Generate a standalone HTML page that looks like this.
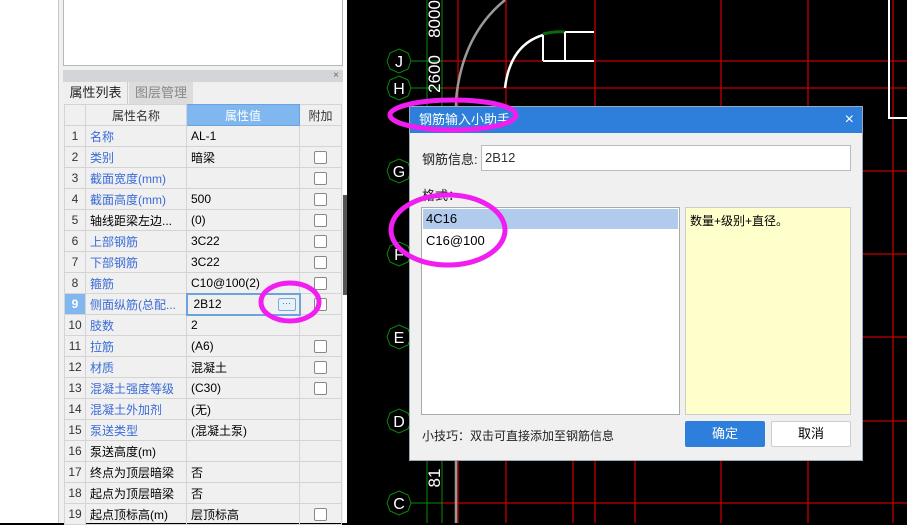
<!DOCTYPE html>
<html><head><meta charset="utf-8"><style>
*{margin:0;padding:0;box-sizing:border-box}
body{width:907px;height:523px;overflow:hidden;background:#000;font-family:"Liberation Sans","Noto Sans CJK SC",sans-serif;font-size:12px;position:relative}
.a{position:absolute}
#left{left:0;top:0;width:347px;height:523px;background:#fff}
table{border-collapse:collapse;table-layout:fixed;position:absolute;left:64px;top:104px;width:277px}
td{border:1px solid #d4d4d4;height:21px;padding:0 0 0 4px;white-space:nowrap;overflow:hidden;font-size:12px;color:#000}
td.n{background:#f0f0f0;text-align:center;padding:0;color:#333}
td.b{color:#3a6bd6}
td.c{text-align:center;padding:0}
.cb{display:inline-block;width:13px;height:13px;border:1px solid #888;border-radius:2px;vertical-align:middle;background:#fff}
.hdr td{background:#f0f0f0;text-align:center;padding:0;color:#333}
</style></head><body>
<div id="left" class="a">
 <div class="a" style="left:58px;top:0;width:1px;height:523px;background:#c8c8c8"></div>
 <div class="a" style="left:59px;top:0;width:284px;height:523px;background:#f0f0f0"></div>
 <div class="a" style="left:63px;top:0;width:280px;height:66px;background:#fff;border:1px solid #b8b8b8;border-top:none"></div>
 <div class="a" style="left:63px;top:70px;width:280px;height:12px;background:#d4d5d8;font-size:10px;color:#666;text-align:right;padding-right:4px;line-height:12px">×</div>
 <div class="a" style="left:64px;top:82px;width:64px;height:22px;background:#efefef;border-right:1px solid #ccc;font-size:13px;line-height:22px;text-align:center;color:#222">属性列表</div>
 <div class="a" style="left:129px;top:82px;width:64px;height:22px;background:#dcdcdc;font-size:13px;line-height:22px;text-align:center;color:#888">图层管理</div>
 <table>
  <colgroup><col style="width:21px"><col style="width:101px"><col style="width:113px"><col style="width:42px"></colgroup>
  <tr class="hdr"><td></td><td>属性名称</td><td style="background:#80b7ee;color:#fff;border-color:#6aa3e0">属性值</td><td>附加</td></tr>
  <tr><td class="n">1</td><td class="b">名称</td><td>AL-1</td><td class="c"></td></tr>
  <tr><td class="n">2</td><td class="b">类别</td><td>暗梁</td><td class="c"><span class="cb"></span></td></tr>
  <tr><td class="n">3</td><td class="b">截面宽度(mm)</td><td></td><td class="c"><span class="cb"></span></td></tr>
  <tr><td class="n">4</td><td class="b">截面高度(mm)</td><td>500</td><td class="c"><span class="cb"></span></td></tr>
  <tr><td class="n">5</td><td>轴线距梁左边...</td><td>(0)</td><td class="c"><span class="cb"></span></td></tr>
  <tr><td class="n">6</td><td class="b">上部钢筋</td><td>3C22</td><td class="c"><span class="cb"></span></td></tr>
  <tr><td class="n">7</td><td class="b">下部钢筋</td><td>3C22</td><td class="c"><span class="cb"></span></td></tr>
  <tr><td class="n">8</td><td class="b">箍筋</td><td>C10@100(2)</td><td class="c"><span class="cb"></span></td></tr>
  <tr><td class="n" style="background:#80b7ee;color:#fff;font-weight:bold">9</td><td class="b">侧面纵筋(总配...</td><td style="border:2px solid #6aa3e0;padding-left:6px;position:relative">2B12<span class="a" style="left:90px;top:3px;width:18px;height:13px;border:1px solid #7aa8d8;border-radius:2px;background:#e8f0fa;font-size:9px;line-height:9px;text-align:center;color:#46a">···</span></td><td class="c"><span class="cb"></span></td></tr>
  <tr><td class="n">10</td><td class="b">肢数</td><td>2</td><td class="c"></td></tr>
  <tr><td class="n">11</td><td class="b">拉筋</td><td>(A6)</td><td class="c"><span class="cb"></span></td></tr>
  <tr><td class="n">12</td><td class="b">材质</td><td>混凝土</td><td class="c"><span class="cb"></span></td></tr>
  <tr><td class="n">13</td><td class="b">混凝土强度等级</td><td>(C30)</td><td class="c"><span class="cb"></span></td></tr>
  <tr><td class="n">14</td><td class="b">混凝土外加剂</td><td>(无)</td><td class="c"></td></tr>
  <tr><td class="n">15</td><td class="b">泵送类型</td><td>(混凝土泵)</td><td class="c"></td></tr>
  <tr><td class="n">16</td><td>泵送高度(m)</td><td></td><td class="c"></td></tr>
  <tr><td class="n">17</td><td>终点为顶层暗梁</td><td>否</td><td class="c"></td></tr>
  <tr><td class="n">18</td><td>起点为顶层暗梁</td><td>否</td><td class="c"></td></tr>
  <tr><td class="n">19</td><td>起点顶标高(m)</td><td>层顶标高</td><td class="c"><span class="cb"></span></td></tr>
 </table>
 <div class="a" style="left:343px;top:195px;width:4px;height:100px;background:#555"></div>
</div>
<svg class="a" style="left:0;top:0" width="907" height="523">
 <g stroke="#c00000" stroke-width="1.3" fill="none">
  <path d="M458 0V523M506 0V523M595 0V523M721 0V523M808 0V523M893 0V523M573 460V523M635 460V523"/>
  <path d="M442 61H907M442 88H907M442 171H907M442 254H907M442 337H907M442 421H907M442 503H907"/>
 </g>
 <path d="M505 0 Q462 35 456 100 V523" stroke="#999" stroke-width="2.5" fill="none"/>
 <path d="M505 88 Q510 45 543 35" stroke="#fff" stroke-width="2.5" fill="none"/>
 <path d="M543 34 Q555 31 565 32" stroke="#0a6a0a" stroke-width="3" fill="none"/>
 <path d="M565 32H594M543 35V61M565 32V61M543 61H594" stroke="#fff" stroke-width="2" fill="none"/>
 <path d="M889 0V118H907" stroke="#fff" stroke-width="2" fill="none"/>
 <g stroke="#0a8a0a" stroke-width="1" fill="none">
  <path d="M427 0V523M442 0V523"/>
  <path d="M411 61H442M411 88H442M411 171H442M411 254H442M411 337H442M411 421H442M411 503H442"/>
  <g id="hx"><polygon points="399,49 408,53 411,61 408,69 399,73 390,69 387,61 390,53"/></g>
  <use href="#hx" y="27"/><use href="#hx" y="110"/><use href="#hx" y="193"/><use href="#hx" y="276"/><use href="#hx" y="360"/><use href="#hx" y="442"/>
 </g>
 <g fill="#fff" font-family="Liberation Sans,sans-serif" font-size="16" text-anchor="middle">
  <text x="399" y="67">J</text><text x="399" y="94">H</text><text x="399" y="177">G</text><text x="399" y="260">F</text><text x="399" y="343">E</text><text x="399" y="427">D</text><text x="399" y="509">C</text>
  <text transform="translate(440,19) rotate(-90)" font-size="17">8000</text>
  <text transform="translate(440,74) rotate(-90)" font-size="17">2600</text>
  <text transform="translate(440,478) rotate(-90)" font-size="17">81</text>
 </g>
</svg>
<div class="a" style="left:409px;top:106px;width:454px;height:355px;background:#f0f0f0;border:1px solid #9ab">
 <div class="a" style="left:0;top:0;width:452px;height:26px;background:#2e7fdb;color:#fff;font-size:13px;line-height:26px;padding-left:9px">钢筋输入小助手<span class="a" style="right:8px;top:0;font-size:16px">×</span></div>
 <div class="a" style="left:12px;top:42px;font-size:13px;color:#222">钢筋信息:</div>
 <div class="a" style="left:71px;top:38px;width:370px;height:26px;background:#fff;border:1px solid #bbb;font-size:13px;line-height:24px;padding-left:3px;color:#333">2B12</div>
 <div class="a" style="left:12px;top:78px;font-size:13px;color:#222">格式：</div>
 <div class="a" style="left:11px;top:100px;width:259px;height:208px;background:#fff;border:1px solid #aaa">
  <div style="margin:1px;height:20px;background:#b0cbec;font-size:13px;line-height:20px;padding-left:3px">4C16</div>
  <div style="height:22px;font-size:13px;line-height:22px;padding-left:4px">C16@100</div>
 </div>
 <div class="a" style="left:275px;top:100px;width:166px;height:208px;background:#ffffcc;border:1px solid #ccc;font-size:12px;padding:4px 4px">数量+级别+直径。</div>
 <div class="a" style="left:12px;top:320px;font-size:12px;color:#222">小技巧：双击可直接添加至钢筋信息</div>
 <div class="a" style="left:275px;top:314px;width:80px;height:26px;background:#2e7fdb;border-radius:2px;color:#fff;font-size:13px;line-height:26px;text-align:center">确定</div>
 <div class="a" style="left:361px;top:314px;width:80px;height:26px;background:#fff;border:1px solid #ccc;border-radius:2px;font-size:13px;line-height:24px;text-align:center">取消</div>
</div>
<svg class="a" style="left:0;top:0" width="907" height="523" fill="none" stroke="#f01ef0" stroke-width="5">
 <ellipse cx="453" cy="115" rx="63" ry="15"/>
 <ellipse cx="448" cy="230" rx="57" ry="35"/>
 <ellipse cx="290" cy="302" rx="29" ry="19"/>
</svg>
</body></html>
